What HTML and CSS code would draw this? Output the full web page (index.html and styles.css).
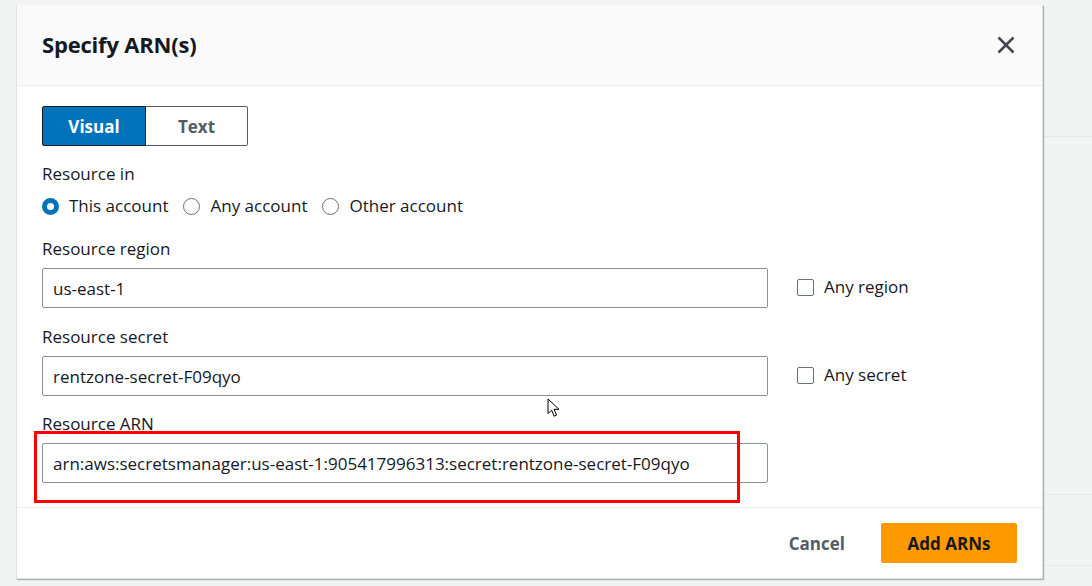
FILE: index.html
```html
<!DOCTYPE html>
<html lang="en">
<head>
<meta charset="utf-8">
<title>Specify ARN(s)</title>
<link rel="stylesheet" href="styles.css">
</head>
<body>
<div class="page">
  <div class="page-left"></div>
  <div class="page-right">
    <div class="page-band band-top"></div>
    <div class="page-band band-mid"></div>
    <div class="page-band band-low"></div>
  </div>
</div>

<div class="modal" role="dialog" aria-labelledby="modal-title">
  <div class="modal-header">
    <h2 class="modal-title" id="modal-title">Specify ARN(s)</h2>
    <button class="close-btn" aria-label="Close">
      <svg width="18" height="18" viewBox="0 0 18 18"><path d="M1.5 1.5 L16.5 16.5 M16.5 1.5 L1.5 16.5" stroke="#424650" stroke-width="2.5" fill="none" stroke-linecap="butt"/></svg>
    </button>
  </div>

  <div class="modal-body">
    <div class="segmented">
      <button class="seg seg-active">Visual</button>
      <button class="seg">Text</button>
    </div>

    <div class="group">
      <div class="label">Resource in</div>
      <div class="radios">
        <label class="radio"><span class="radio-dot checked"></span>This account</label>
        <label class="radio"><span class="radio-dot"></span>Any account</label>
        <label class="radio"><span class="radio-dot"></span>Other account</label>
      </div>
    </div>

    <div class="field field-first">
      <div class="label">Resource region</div>
      <div class="field-row">
        <div class="input">us-east-1</div>
        <label class="check"><span class="check-box"></span>Any region</label>
      </div>
    </div>

    <div class="field field-second">
      <div class="label">Resource secret</div>
      <div class="field-row">
        <div class="input">rentzone-secret-F09qyo</div>
        <label class="check"><span class="check-box"></span>Any secret</label>
      </div>
    </div>

    <div class="field">
      <div class="label">Resource ARN</div>
      <div class="field-row">
        <div class="input">arn:aws:secretsmanager:us-east-1:905417996313:secret:rentzone-secret-F09qyo</div>
      </div>
    </div>
  </div>

  <div class="modal-footer">
    <button class="btn-link">Cancel</button>
    <button class="btn-primary">Add ARNs</button>
  </div>
</div>

<div class="highlight"></div>

<svg class="cursor" width="14" height="20" viewBox="0 0 14 20">
  <path d="M1 1 L1 15.5 L4.6 12.2 L7.2 18.2 L9.6 17.1 L7 11.3 L12 11.3 Z" fill="#fff" stroke="#000" stroke-width="1" stroke-linejoin="miter"/>
</svg>
</body>
</html>
```

FILE: styles.css
```css
* { box-sizing: border-box; }

html, body {
  margin: 0;
  padding: 0;
  width: 1092px;
  height: 586px;
  overflow: hidden;
}

body {
  background: #f2f3f3;
  font-family: "Open Sans", "Noto Sans", sans-serif;
  font-size: 17px;
  color: #16191f;
  position: relative;
}

/* background page (behind the modal) */
.page {
  display: flex;
}
.page-left { width: 1043px; flex: none; }
.page-right {
  flex: 1;
  display: flex;
  flex-direction: column;
}
.page-band { border-bottom: 1px solid #e6e9e9; }
.band-top { height: 137px; }
.band-mid { height: 358px; }
.band-low { height: 71px; }

/* modal */
.modal {
  position: absolute;
  left: 16px;
  top: 5px;
  width: 1027px;
  height: 574px;
  background: #fff;
  border: 1px solid #dfe3e3;
  border-top: none;
  box-shadow: 1px 1px 1px rgba(0, 28, 36, 0.3);
  display: flex;
  flex-direction: column;
}

.modal-header {
  height: 81px;
  flex: none;
  background: #fafafa;
  border-bottom: 1px solid #eaeded;
  padding: 0 25px 3px 25px;
  display: flex;
  align-items: center;
  justify-content: space-between;
}

.modal-title {
  margin: 0;
  font-size: 22px;
  font-weight: 700;
  line-height: 28px;
  color: #16191f;
  letter-spacing: -0.2px;
}

.close-btn {
  border: none;
  background: none;
  padding: 0;
  margin-right: 2px;
  margin-top: 3px;
  width: 18px;
  height: 18px;
  display: flex;
}

.modal-body {
  flex: 1;
  padding: 20px 25px 0 25px;
}

/* segmented control */
.segmented {
  display: flex;
  height: 40px;
}
.seg {
  font-family: inherit;
  font-size: 17px;
  font-weight: 700;
  height: 40px;
  padding: 0;
  background: #fff;
  color: #545b64;
  border: 1px solid #545b64;
  border-left: none;
  border-radius: 0 2px 2px 0;
  width: 102px;
}
.seg-active {
  width: 104px;
  background: #0073bb;
  color: #fff;
  border: 1px solid #16191f;
  border-radius: 2px 0 0 2px;
}

.group { margin-top: 17px; }

.label {
  line-height: 22px;
  font-size: 17px;
  color: #16191f;
}

.radios {
  display: flex;
  margin-top: 10px;
  height: 22px;
  align-items: center;
}
.radio {
  display: flex;
  align-items: center;
  margin-right: 15px;
  line-height: 22px;
}
.radio-dot {
  width: 17px;
  height: 17px;
  border-radius: 50%;
  border: 1.5px solid #687078;
  margin-right: 10px;
  margin-top: 1px;
  flex: none;
}
.radio-dot.checked {
  border: 5.5px solid #0073bb;
  background: #fff;
}

.field { margin-top: 17px; }
.field-first { margin-top: 21px; }
.field-second { margin-top: 18px; }
.field .label { margin-bottom: 8px; }

.field-row {
  display: flex;
  align-items: center;
}

.input {
  width: 726px;
  height: 40px;
  border: 1px solid #879596;
  border-radius: 2px;
  padding: 0 10px;
  display: flex;
  align-items: center;
  font-size: 17px;
  color: #16191f;
  white-space: nowrap;
}

.check {
  display: flex;
  align-items: center;
  margin-left: 29px;
  margin-top: -2px;
  line-height: 22px;
}
.check-box {
  width: 17px;
  height: 17px;
  border: 1px solid #687078;
  border-radius: 2px;
  margin-right: 10px;
  flex: none;
}

/* footer */
.modal-footer {
  height: 71px;
  flex: none;
  border-top: 1px solid #eaeded;
  padding: 0 25px;
  display: flex;
  align-items: center;
  justify-content: flex-end;
}

.btn-link {
  font-family: inherit;
  font-size: 17px;
  font-weight: 700;
  color: #545b64;
  background: none;
  border: none;
  padding: 0 20px;
  height: 40px;
  margin-right: 16px;
}

.btn-primary {
  font-family: inherit;
  font-size: 17px;
  font-weight: 700;
  color: #16191f;
  background: #ff9900;
  border: none;
  border-radius: 2px;
  height: 40px;
  width: 136px;
}

/* annotation overlay */
.highlight {
  position: absolute;
  left: 34px;
  top: 431px;
  width: 706px;
  height: 72px;
  border: 3px solid #ff0000;
}

.cursor {
  position: absolute;
  left: 547px;
  top: 398px;
}
```
